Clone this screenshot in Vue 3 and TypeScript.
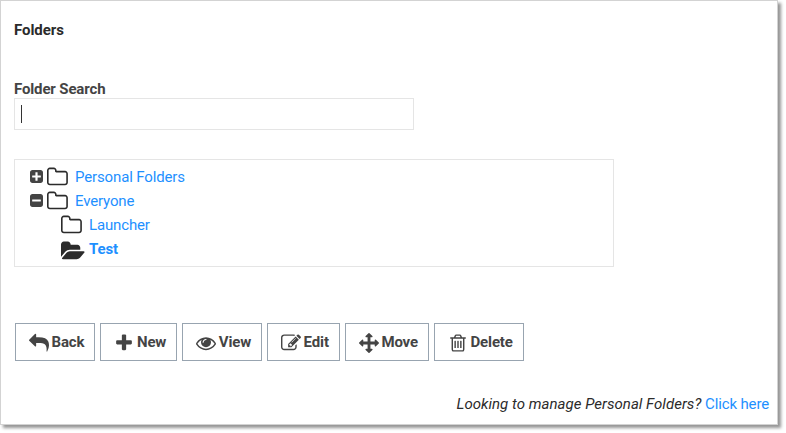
<script setup lang="ts">
import { ref } from 'vue'

interface Action {
  label: string
  icon: string
}

interface FolderNode {
  name: string
  depth: number
  toggle?: 'plus' | 'minus'
  active?: boolean
}

const square =
  'm256-544v960q0 119-84.5 203.5t-203.5 84.5h-960q-119 0-203.5-84.5t-84.5-203.5v-960q0-119 84.5-203.5t203.5-84.5h960q119 0 203.5 84.5t84.5 203.5z'

const toggles = {
  plus:
    'M1408 960v-128q0-26-19-45t-45-19h-320v-320q0-26-19-45t-45-19h-128q-26 0-45 19t-19 45v320h-320q-26 0-45 19t-19 45v128q0 26 19 45t45 19h320v320q0 26 19 45t45 19h128q26 0 45-19t19-45v-320h320q26 0 45-19t19-45z' +
    square,
  minus:
    'M1408 960v-128q0-26-19-45t-45-19h-896q-26 0-45 19t-19 45v128q0 26 19 45t45 19h896q26 0 45-19t19-45z' +
    square,
}

const folderClosed =
  'M1600 1312v-704q0-40-28-68t-68-28h-704q-40 0-68-28t-28-68v-64q0-40-28-68t-68-28h-320q-40 0-68 28t-28 68v960q0 40 28 68t68 28h1216q40 0 68-28t28-68zm128-704v704q0 92-66 158t-158 66h-1216q-92 0-158-66t-66-158v-960q0-92 66-158t158-66h320q92 0 158 66t66 158v32h672q92 0 158 66t66 158z'
const folderOpen =
  'M1943 952q0 31-31 66l-336 396q-43 51-120.5 86.5t-143.5 35.5h-1088q-34 0-60.5-13t-26.5-43q0-31 31-66l336-396q43-51 120.5-86.5t143.5-35.5h1088q34 0 60.5 13t26.5 43zm-343-344v160h-832q-94 0-197 47.5t-164 119.5l-337 396-5 6q0-4-.5-12.5t-.5-12.5v-960q0-92 66-158t158-66h320q92 0 158 66t66 158v32h544q92 0 158 66t66 158z'

const folders: FolderNode[] = [
  { name: 'Personal Folders', depth: 0, toggle: 'plus' },
  { name: 'Everyone', depth: 0, toggle: 'minus' },
  { name: 'Launcher', depth: 1 },
  { name: 'Test', depth: 1, active: true },
]

const actions: Action[] = [
  {
    label: 'Back',
    icon: 'M1792 1120q0 166-127 451-3 7-10.5 24t-13.5 30-13 22q-12 17-28 17-15 0-23.5-10t-8.5-25q0-9 2.5-26.5t2.5-23.5q5-68 5-123 0-101-17.5-181t-48.5-138.5-80-101-105.5-69.5-133-42.5-154-21.5-175.5-6h-224v256q0 26-19 45t-45 19-45-19l-512-512q-19-19-19-45t19-45l512-512q19-19 45-19t45 19 19 45v256h224q713 0 875 403 53 134 53 333z',
  },
  {
    label: 'New',
    icon: 'M1600 736v192q0 40-28 68t-68 28h-416v416q0 40-28 68t-68 28h-192q-40 0-68-28t-28-68v-416h-416q-40 0-68-28t-28-68v-192q0-40 28-68t68-28h416v-416q0-40 28-68t68-28h192q40 0 68 28t28 68v416h416q40 0 68 28t28 68z',
  },
  {
    label: 'View',
    icon: 'M1664 960q-152-236-381-353 61 104 61 225 0 185-131.5 316.5t-316.5 131.5-316.5-131.5-131.5-316.5q0-121 61-225-229 117-381 353 133 205 333.5 326.5t434.5 121.5 434.5-121.5 333.5-326.5zm-720-384q0-20-14-34t-34-14q-125 0-214.5 89.5t-89.5 214.5q0 20 14 34t34 14 34-14 14-34q0-86 61-147t147-61q20 0 34-14t14-34zm848 384q0 34-20 69-140 230-376.5 368.5t-499.5 138.5-499.5-139-376.5-368q-20-35-20-69t20-69q140-229 376.5-368t499.5-139 499.5 139 376.5 368q20 35 20 69z',
  },
  {
    label: 'Edit',
    icon: 'M888 1184l116-116-152-152-116 116v56h96v96h56zm440-720q-16-16-33 1l-350 350q-17 17-1 33t33-1l350-350q17-17 1-33zm80 594v190q0 119-84.5 203.5t-203.5 84.5h-832q-119 0-203.5-84.5t-84.5-203.5v-832q0-119 84.5-203.5t203.5-84.5h832q63 0 117 25 15 7 18 23 3 17-9 29l-49 49q-14 14-32 8-23-6-45-6h-832q-66 0-113 47t-47 113v832q0 66 47 113t113 47h832q66 0 113-47t47-113v-126q0-13 9-22l64-64q15-15 35-7t20 29zm-96-738l288 288-672 672h-288v-288zm444 132l-92 92-288-288 92-92q28-28 68-28t68 28l152 152q28 28 28 68t-28 68z',
  },
  {
    label: 'Move',
    icon: 'M1792 896q0 26-19 45l-256 256q-19 19-45 19t-45-19-19-45v-128h-384v384h128q26 0 45 19t19 45-19 45l-256 256q-19 19-45 19t-45-19l-256-256q-19-19-19-45t19-45 45-19h128v-384h-384v128q0 26-19 45t-45 19-45-19l-256-256q-19-19-19-45t19-45l256-256q19-19 45-19t45 19 19 45v128h384v-384h-128q-26 0-45-19t-19-45 19-45l256-256q19-19 45-19t45 19l256 256q19 19 19 45t-19 45-45 19h-128v384h384v-128q0-26 19-45t45-19 45 19l256 256q19 19 19 45z',
  },
  {
    label: 'Delete',
    icon: 'M704 736v576q0 14-9 23t-23 9h-64q-14 0-23-9t-9-23v-576q0-14 9-23t23-9h64q14 0 23 9t9 23zm256 0v576q0 14-9 23t-23 9h-64q-14 0-23-9t-9-23v-576q0-14 9-23t23-9h64q14 0 23 9t9 23zm256 0v576q0 14-9 23t-23 9h-64q-14 0-23-9t-9-23v-576q0-14 9-23t23-9h64q14 0 23 9t9 23zm128 724v-948h-896v948q0 22 7 40.5t14.5 27 10.5 8.5h832q3 0 10.5-8.5t14.5-27 7-40.5zm-672-1076h448l-48-117q-7-9-17-11h-317q-10 2-17 11zm928 32v64q0 14-9 23t-23 9h-96v948q0 83-47 143.5t-113 60.5h-832q-66 0-113-58.5t-47-141.5v-952h-96q-14 0-23-9t-9-23v-64q0-14 9-23t23-9h309l70-167q15-37 54-63t79-26h320q40 0 79 26t54 63l70 167h309q14 0 23 9t9 23z',
  },
]

const query = ref('')
</script>

<template>
  <main class="panel">
    <h1 class="title">Folders</h1>

    <label class="search-label" for="folder-search">Folder Search</label>
    <div class="search">
      <span class="caret"></span>
      <input id="folder-search" v-model="query" class="search-input" type="text" />
    </div>

    <ul class="tree">
      <li v-for="f in folders" :key="f.name" class="node" :class="{ child: f.depth > 0 }">
        <svg v-if="f.toggle" class="toggle" viewBox="128 128 1536 1536">
          <path :d="toggles[f.toggle]" />
        </svg>
        <svg class="folder" :class="{ open: f.active }" viewBox="64 0 1984 1792">
          <path :d="f.active ? folderOpen : folderClosed" />
        </svg>
        <a class="link" :class="{ active: f.active }">{{ f.name }}</a>
      </li>
    </ul>

    <div class="actions">
      <button v-for="a in actions" :key="a.label" class="btn" type="button">
        <span class="icon-box">
          <svg class="icon" viewBox="0 0 1792 1792"><path :d="a.icon" /></svg>
        </span>
        <span>{{ a.label }}</span>
      </button>
    </div>

    <p class="hint"><em>Looking to manage Personal Folders?</em> <a class="link">Click here</a></p>
  </main>
</template>

<style>
body {
  min-height: 100vh;
  background: #fff;
}
</style>

<style scoped>
.panel {
  box-sizing: border-box;
  width: 778px;
  height: 425px;
  margin-bottom: 8px;
  padding: 19px 8px 0 13px;
  border: 1px solid #d3d3d3;
  background: #fff;
  box-shadow: 3px 3px 3px rgba(0, 0, 0, 0.42);
  font-family: Roboto, 'Liberation Sans', sans-serif;
  font-size: 15px;
  line-height: 20px;
  color: #444;
}
.title {
  margin: 0 0 39px;
  font-size: 15px;
  font-weight: 700;
  line-height: 20px;
  letter-spacing: -0.05px;
  color: #2b2b2b;
}
.search-label {
  display: block;
  height: 19px;
  font-weight: 700;
  letter-spacing: -0.14px;
}
.search {
  box-sizing: border-box;
  display: flex;
  align-items: center;
  width: 400px;
  height: 32px;
  padding: 0 6px;
  border: 1px solid #e5e5e5;
}
.caret {
  width: 1px;
  height: 18px;
  background: #333;
}
.search-input {
  flex: 1;
  min-width: 0;
  padding: 0;
  border: 0;
  outline: 0;
  background: transparent;
  font: inherit;
}
.tree {
  box-sizing: border-box;
  width: 600px;
  height: 108px;
  margin: 29px 0 56px;
  padding: 5px 0 0 15px;
  border: 1px solid #e5e5e5;
  list-style: none;
}
.node {
  display: flex;
  align-items: center;
  height: 24px;
}
.child {
  padding-left: 31px;
}
.toggle {
  width: 13px;
  height: 13px;
  margin: 0 4px 1px 0;
  fill: #444;
}
.folder {
  width: 24.9px;
  height: 22.5px;
  margin: 0.5px 3.1px 0 0;
  fill: #2b2b2b;
}
.folder.open {
  margin-top: 4.5px;
}
.link {
  color: #1e90ff;
  letter-spacing: -0.14px;
}
.active {
  font-weight: 700;
}
.actions {
  display: flex;
  gap: 5px;
  padding-left: 1px;
}
.btn {
  box-sizing: border-box;
  display: flex;
  align-items: center;
  height: 38px;
  padding: 0 10px;
  border: 1px solid #98a4b0;
  background: #fff;
  color: #444;
  font: 700 15px/20px Roboto, 'Liberation Sans', sans-serif;
  letter-spacing: -0.13px;
}
.icon-box {
  display: flex;
  justify-content: center;
  width: 25.5px;
  padding-top: 1px;
}
.icon {
  width: 20px;
  height: 20px;
  fill: #444;
}
.hint {
  margin: 33px 0 0;
  text-align: right;
}
.hint em {
  color: #2b2b2b;
  letter-spacing: 0.03px;
}
</style>
